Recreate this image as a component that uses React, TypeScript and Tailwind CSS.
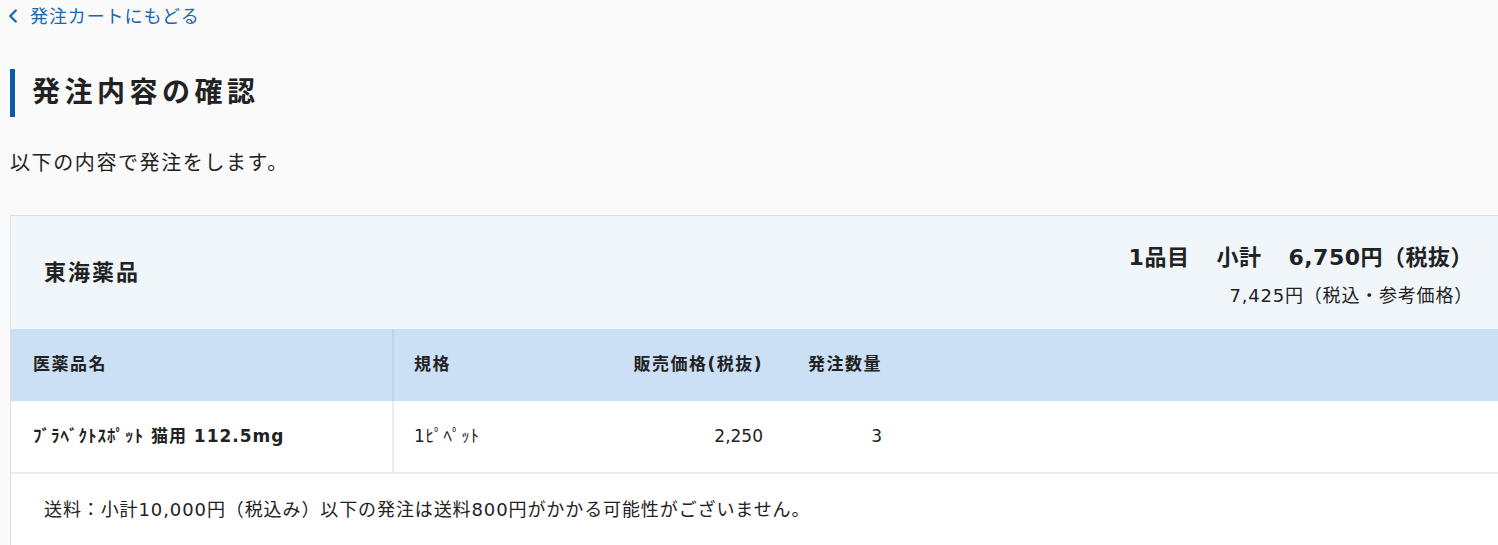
import { ChevronLeft } from 'lucide-react';

const font = { fontFamily: '"DejaVu Sans", "Noto Sans CJK JP", sans-serif' };

export default function App() {
  return (
    <div className="min-h-[545px] w-full overflow-hidden bg-[#fafafa] text-[#222]" style={font}>
      <div className="pl-[10px]">
        <a href="#" className="flex h-[32px] items-center text-[18px] tracking-[0.9px] text-[#1766b1]">
          <ChevronLeft className="-ml-[8px] mr-[6px] h-[22px] w-[22px]" strokeWidth={2.6} />
          <span>発注カートにもどる</span>
        </a>

        <div className="mt-[37px] flex h-[48px] items-center border-l-[5px] border-[#0b5aa8] pl-[17px]">
          <h1 className="text-[28px] font-bold tracking-[4.5px]">発注内容の確認</h1>
        </div>

        <p className="mt-[31px] text-[20px] tracking-[1.6px]">以下の内容で発注をします。</p>

        <div className="mt-[37px] border border-r-0 border-b-0 border-[#dcdfe4] bg-white">
          <div className="flex h-[113px] items-center justify-between bg-[#f1f6fb] pl-[33px] pr-[25px]">
            <div className="text-[22px] font-bold tracking-[2px]">東海薬品</div>
            <div className="flex flex-col items-end pt-[4px]">
              <div className="text-[22px] font-bold tracking-[0.5px]">
                1品目<span className="inline-block w-[27px]" />小計<span className="inline-block w-[27px]" />6,750円（税抜）
              </div>
              <div className="mt-[8px] text-[18px] tracking-[0.8px]">7,425円（税込・参考価格）</div>
            </div>
          </div>

          <table className="w-full border-collapse">
            <thead>
              <tr className="h-[72px] bg-[#cbe0f4] text-[17px] tracking-[1.5px]">
                <th className="w-[382px] border-r-2 border-[#bfd3e8] pl-[22px] text-left font-bold">医薬品名</th>
                <th className="w-[190px] pl-[20px] text-left font-bold">規格</th>
                <th className="w-[200px] pr-[20px] text-right font-bold">販売価格(税抜)</th>
                <th className="w-[119px] pr-[20px] text-right font-bold">発注数量</th>
                <th />
              </tr>
            </thead>
            <tbody>
              <tr className="h-[72px] border-b-2 border-[#e8ebf1] bg-white text-[17px]">
                <td className="border-r-2 border-[#e8ebf1] pl-[22px] font-bold tracking-[1px]">ﾌﾞﾗﾍﾞｸﾄｽﾎﾟｯﾄ 猫用 112.5mg</td>
                <td className="pl-[20px] tracking-[0.8px]">1ﾋﾟﾍﾟｯﾄ</td>
                <td className="pr-[20px] text-right">2,250</td>
                <td className="pr-[20px] text-right">3</td>
                <td />
              </tr>
            </tbody>
          </table>

          <div className="pl-[33px] pt-[22px] pb-[40px] text-[18px] tracking-[0.9px]">
            送料：小計10,000円（税込み）以下の発注は送料800円がかかる可能性がございません。
          </div>
        </div>
      </div>
    </div>
  );
}
